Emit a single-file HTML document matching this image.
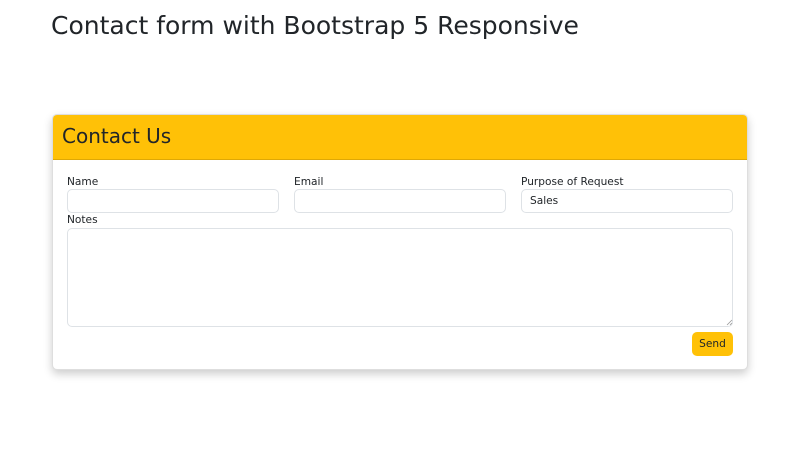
<!DOCTYPE html>
<html><head><style>
*{box-sizing:border-box;margin:0;padding:0}
body{width:800px;height:450px;background:#fff;font-family:"DejaVu Sans",sans-serif;color:#212529;position:relative;overflow:hidden}
.a{position:absolute}
h1{position:absolute;left:51px;top:11px;font-size:25px;font-weight:400;white-space:nowrap}
.card{left:52px;top:114px;width:696px;height:256px;border:1px solid rgba(0,0,0,.13);border-radius:5px;box-shadow:0 4px 9px rgba(0,0,0,.2);overflow:hidden;background:#fff}
.hd{left:0;top:0;width:100%;height:45px;background:#ffc107;border-bottom:1px solid rgba(0,0,0,.13)}
.hd span{position:absolute;left:9px;top:9px;font-size:20px}
.lbl{font-size:10.6px}
.in{border:1px solid #dee2e6;border-radius:5px;background:#fff;font-size:10.6px}
.btn{left:692px;top:332px;width:41px;height:24px;background:#ffc107;border-radius:5px;font-size:10.6px;text-align:center;line-height:24px}
</style></head><body>
<h1>Contact form with Bootstrap 5 Responsive</h1>
<div class="a card"><div class="a hd"><span>Contact Us</span></div></div>
<div class="a lbl" style="left:67px;top:176px">Name</div>
<div class="a lbl" style="left:294px;top:176px">Email</div>
<div class="a lbl" style="left:521px;top:176px">Purpose of Request</div>
<div class="a in" style="left:67px;top:189px;width:212px;height:24px"></div>
<div class="a in" style="left:294px;top:189px;width:212px;height:24px"></div>
<div class="a in" style="left:521px;top:189px;width:212px;height:24px;padding:5px 8px">Sales</div>
<div class="a lbl" style="left:67px;top:214px">Notes</div>
<div class="a in" style="left:67px;top:228px;width:666px;height:99px"></div>
<svg class="a" style="left:726px;top:319px" width="7" height="7"><path d="M1 6L6 1M4 6L6 4" stroke="#999" stroke-width="0.8"/></svg>
<div class="a btn">Send</div>
</body></html>
